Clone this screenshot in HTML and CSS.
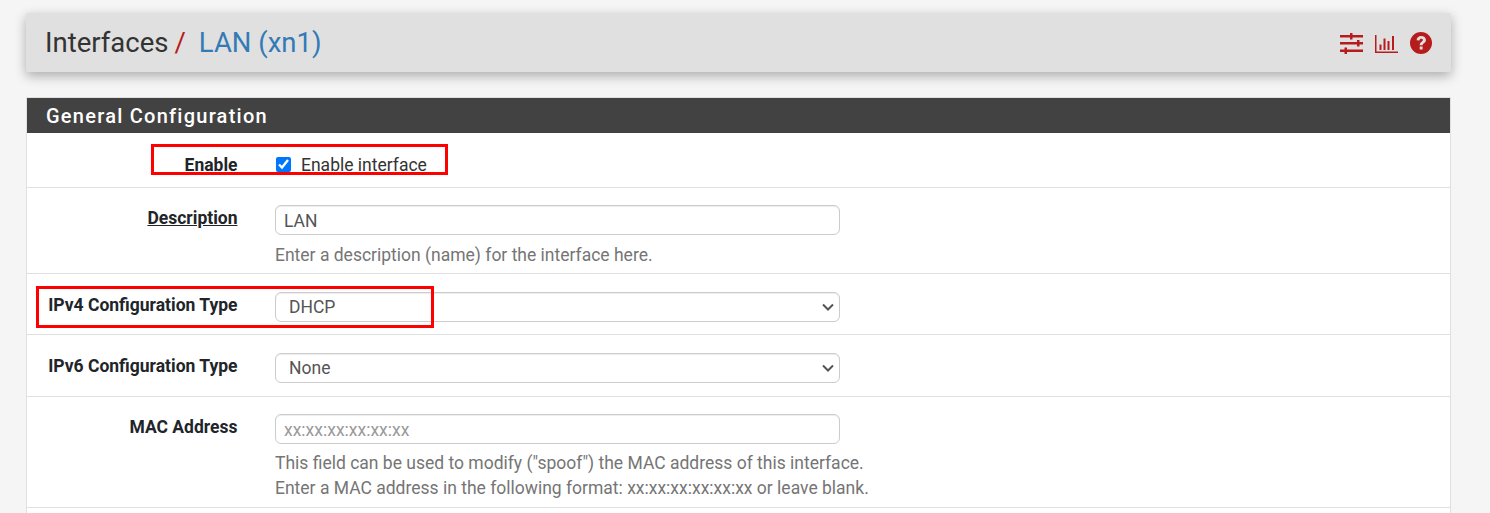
FILE: index.html
```html
<!DOCTYPE html>
<html lang="en">
<head>
<meta charset="utf-8">
<title>Interfaces / LAN (xn1)</title>
<link rel="stylesheet" href="styles.css">
</head>
<body>
<header class="crumbs">
  <h1 class="crumb-title">Interfaces<span class="slash">/</span><a class="crumb-link">LAN (xn1)</a></h1>
  <div class="crumb-icons">
    <svg class="ico ico-sliders" viewBox="0 0 23 22" width="23" height="22"><path d="M0 3h23v2.600H0zM0 10h23v2.600H0zM0 17.500h23v2.600H0zM10 1h2.500v6.500H10zM17 8h2.500v6.500H17zM4.500 15.500H7V22H4.500z"/></svg>
    <svg class="ico ico-chart" viewBox="0 0 23 22" width="23" height="22"><path d="M0 3h1.500v16.500H23V21H0zM4.500 12.500h2v5.500h-2zM8.500 6.500h2V18h-2zM12.500 9h2v9h-2zM17 4h2v14h-2z"/></svg>
    <svg class="ico ico-help" viewBox="0 0 22 22" width="22" height="22"><circle cx="11" cy="11" r="11"/><path class="ico-q" d="M6.600 8.300c0-2.700 2-4.300 4.600-4.300 2.500 0 4.700 1.500 4.700 4 0 3.200-3.300 3.300-3.300 5.300H9.700c0-3.500 3.200-3.500 3.200-5.200 0-.9-.8-1.400-1.700-1.400-1 0-1.600.7-1.700 1.700zM9.700 14.500h2.900v3H9.700z"/></svg>
  </div>
</header>

<section class="panel">
  <h2 class="panel-heading">General Configuration</h2>
  <div class="row row-enable">
    <label class="row-label">Enable</label>
    <div class="row-field">
      <label class="check"><input type="checkbox" checked><span>Enable interface</span></label>
    </div>
    <div class="mark mark-enable"></div>
  </div>
  <div class="row row-desc">
    <label class="row-label row-label-u">Description</label>
    <div class="row-field">
      <input class="control" type="text" value="LAN">
      <p class="help help-desc">Enter a description (name) for the interface here.</p>
    </div>
  </div>
  <div class="row row-select">
    <label class="row-label">IPv4 Configuration Type</label>
    <div class="row-field">
      <select class="control control-select"><option>DHCP</option></select>
    </div>
    <div class="mark mark-ipv4"></div>
  </div>
  <div class="row row-select row-select-b">
    <label class="row-label">IPv6 Configuration Type</label>
    <div class="row-field">
      <select class="control control-select"><option>None</option></select>
    </div>
  </div>
  <div class="row row-mac">
    <label class="row-label">MAC Address</label>
    <div class="row-field">
      <input class="control" type="text" placeholder="xx:xx:xx:xx:xx:xx">
      <p class="help">This field can be used to modify ("spoof") the MAC address of this interface.<br>Enter a MAC address in the following format: xx:xx:xx:xx:xx:xx or leave blank.</p>
    </div>
  </div>
</section>
</body>
</html>
```
FILE: styles.css
```css
* { box-sizing: border-box; }
html, body { height: 100%; }
body {
  margin: 0;
  padding: 13px 39px 0 26px;
  background: #f5f5f5;
  font-family: Roboto, "Liberation Sans", sans-serif;
  font-size: 17.500px;
  color: #212529;
  overflow: hidden;
}
.crumbs {
  height: 59px;
  display: flex;
  align-items: center;
  justify-content: space-between;
  padding: 0 19px;
  background: #e0e0e0;
  border-radius: 2px;
  box-shadow: 0 4px 12px rgba(0, 0, 0, .3);
}
.crumb-title {
  margin: 0;
  font-size: 27.500px;
  font-weight: 400;
  line-height: 1.2;
  color: #333;
}
.slash { margin: 0 13px 0 6px; color: #b71c1c; }
.crumb-link { color: #337ab7; }
.crumb-icons { display: flex; align-items: center; gap: 12px; }
.ico { display: block; fill: #b71c1c; }
.ico-q { fill: #e0e0e0; }
.panel {
  margin-top: 25px;
  background: #fff;
  border: 1px solid #e0e0e0;
  border-bottom: 0;
  height: 420px;
}
.panel-heading {
  margin: 0;
  height: 35px;
  padding-left: 19px;
  background: #424242;
  color: #fff;
  font-size: 20px;
  font-weight: 500;
  line-height: 36px;
  letter-spacing: 1.250px;
}
.row {
  position: relative;
  display: grid;
  grid-template-columns: 210.500px 565px;
  column-gap: 37.500px;
  border-bottom: 1px solid #e0e0e0;
}
.row-enable { height: 55px; padding-top: 22px; }
.row-desc { height: 86px; padding-top: 17px; }
.row-select { height: 61px; padding-top: 18px; }
.row-select-b { height: 62px; padding-top: 18px; }
.row-mac { height: 111px; padding-top: 17px; }
.row-label {
  text-align: right;
  font-weight: 700;
  font-size: 17.500px;
  line-height: 19px;
  color: #212529;
}
.row-enable .row-label { padding-top: 1px; }
.row-select .row-label, .row-desc .row-label, .row-mac .row-label { padding-top: 4px; }
.row-label-u { text-decoration: underline; }
.check { display: flex; align-items: center; height: 19px; color: #333; }
.check input { width: 15px; height: 15px; margin: 0 10px 0 1px; accent-color: #0075ff; }
.control {
  display: block;
  width: 565px;
  height: 30px;
  padding: 2px 8px 0;
  background: #fff;
  border: 1px solid #ccc;
  border-radius: 6px;
  box-shadow: inset 0 1px 1px rgba(0, 0, 0, .075);
  font-family: inherit;
  font-size: 17.500px;
  color: #555;
}
.control::placeholder { color: #999; opacity: 1; }
.control-select {
  appearance: none;
  padding: 0 8px 0 13px;
  background: #fff url("data:image/svg+xml,%3Csvg xmlns='http://www.w3.org/2000/svg' width='12' height='8' viewBox='0 0 12 8'%3E%3Cpath d='M1 1.500l5 5 5-5' fill='none' stroke='%23555' stroke-width='2'/%3E%3C/svg%3E") no-repeat right 5px center;
}
.help {
  margin: 7px 0 0;
  font-size: 17.500px;
  line-height: 25px;
  color: #757575;
  white-space: nowrap;
}
.help-desc { margin-top: 8px; }
.mark { position: absolute; border: 3px solid #f00; pointer-events: none; }
.mark-enable { left: 124px; top: 11px; width: 297px; height: 31px; }
.mark-ipv4 { left: 9px; top: 12px; width: 398px; height: 42px; }
```
